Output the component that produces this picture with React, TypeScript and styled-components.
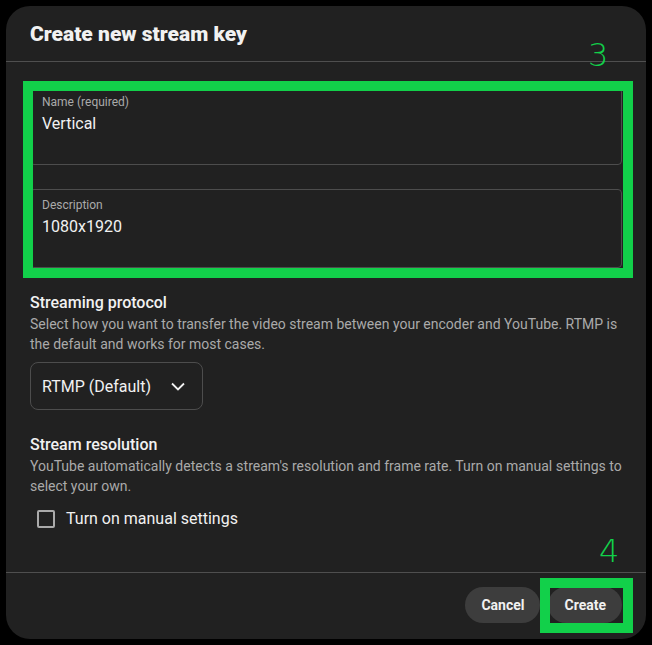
import React from "react";
import styled, { createGlobalStyle } from "styled-components";

const GlobalStyle = createGlobalStyle`
    html, body {
        margin: 0;
        padding: 0;
        background: #000;
        font-family: Roboto, "Liberation Sans", Arial, sans-serif;
    }
`;

export default function App() {
    return (
        <>
            <GlobalStyle />
            <Page>
                <Dialog>
                    <Header>
                        <Title>Create new stream key</Title>
                    </Header>
                    <Body>
                        <Field $height={77} $padTop={5}>
                            <FieldLabel>Name (required)</FieldLabel>
                            <FieldValue>Vertical</FieldValue>
                        </Field>
                        <Field $height={79} $padTop={7}>
                            <FieldLabel>Description</FieldLabel>
                            <FieldValue>1080x1920</FieldValue>
                        </Field>
                        <Section>
                            <SectionTitle>Streaming protocol</SectionTitle>
                            <SectionText>
                                Select how you want to transfer the video stream between your encoder and YouTube. RTMP is
                                the default and works for most cases.
                            </SectionText>
                        </Section>
                        <Dropdown>
                            <span>RTMP (Default)</span>
                            <svg width="24" height="24" viewBox="0 0 24 24">
                                <path d="M6 9.5l6 6 6-6" fill="none" stroke="#f1f1f1" strokeWidth="1.8" />
                            </svg>
                        </Dropdown>
                        <Section $top={24}>
                            <SectionTitle>Stream resolution</SectionTitle>
                            <SectionText>
                                YouTube automatically detects a stream's resolution and frame rate. Turn on manual settings to
                                select your own.
                            </SectionText>
                        </Section>
                        <CheckRow>
                            <CheckBox />
                            <CheckLabel>Turn on manual settings</CheckLabel>
                        </CheckRow>
                    </Body>
                    <Footer>
                        <PillButton>Cancel</PillButton>
                        <PillButton>Create</PillButton>
                    </Footer>

                    <Highlight $left={17} $top={75} $width={610} $height={197} />
                    <StepNumber $left={582} $top={33}>3</StepNumber>
                    <Highlight $left={534} $top={572} $width={93} $height={55} />
                    <StepNumber $left={593} $top={529}>4</StepNumber>
                </Dialog>
            </Page>
        </>
    );
}

const Page = styled.div`
    width: 652px;
    height: 645px;
    padding: 6px;
    box-sizing: border-box;
`;

const Dialog = styled.div`
    position: relative;
    width: 640px;
    height: 633px;
    background: #212121;
    border-radius: 24px;
    display: flex;
    flex-direction: column;
    overflow: hidden;
    color: #f1f1f1;
`;

const Header = styled.div`
    height: 55px;
    flex-shrink: 0;
    display: flex;
    align-items: center;
    padding: 0 24px;
    border-bottom: 1px solid #4f4f4f;
`;

const Title = styled.h1`
    margin: 0;
    font-size: 21px;
    font-weight: 900;
    color: #f1f1f1;
`;

const Body = styled.div`
    flex: 1;
    padding: 26px 24px 0;
    display: flex;
    flex-direction: column;
`;

const Field = styled.div<{ $height: number; $padTop: number }>`
    height: ${(p) => p.$height}px;
    box-sizing: border-box;
    border: 1px solid #4d4d4d;
    border-radius: 4px;
    padding: ${(p) => p.$padTop}px 11px 0;
    margin-bottom: 24px;
`;

const FieldLabel = styled.div`
    font-size: 12px;
    line-height: 16px;
    color: #aaaaaa;
`;

const FieldValue = styled.div`
    margin-top: 2px;
    font-size: 16px;
    line-height: 24px;
    color: #f1f1f1;
`;

const Section = styled.div<{ $top?: number }>`
    margin-top: ${(p) => p.$top ?? 0}px;
`;

const SectionTitle = styled.div`
    font-size: 16px;
    font-weight: 500;
    line-height: 22px;
    color: #f1f1f1;
`;

const SectionText = styled.div`
    font-size: 14px;
    line-height: 20px;
    color: #aaaaaa;
`;

const Dropdown = styled.div`
    margin-top: 8px;
    width: 173px;
    height: 48px;
    box-sizing: border-box;
    border: 1px solid #4d4d4d;
    border-radius: 8px;
    display: flex;
    align-items: center;
    justify-content: space-between;
    padding: 0 12px 0 11px;
    font-size: 16px;
    color: #f1f1f1;
`;

const CheckRow = styled.div`
    margin-top: 13px;
    display: flex;
    align-items: center;
    padding-left: 7px;
    gap: 11px;
`;

const CheckBox = styled.div`
    width: 18px;
    height: 18px;
    box-sizing: border-box;
    border: 2px solid #aaaaaa;
    border-radius: 2px;
`;

const CheckLabel = styled.span`
    font-size: 16px;
    color: #f1f1f1;
`;

const Footer = styled.div`
    height: 67px;
    flex-shrink: 0;
    box-sizing: border-box;
    border-top: 1px solid #4f4f4f;
    display: flex;
    align-items: center;
    justify-content: flex-end;
    gap: 8px;
    padding: 0 24px 2px;
`;

const PillButton = styled.button`
    height: 36px;
    padding: 0 16px;
    border: none;
    border-radius: 18px;
    background: #3d3d3d;
    color: #f1f1f1;
    font-family: Roboto, "Liberation Sans", Arial, sans-serif;
    font-size: 14px;
    font-weight: 700;
`;

const Highlight = styled.div<{ $left: number; $top: number; $width: number; $height: number }>`
    position: absolute;
    left: ${(p) => p.$left}px;
    top: ${(p) => p.$top}px;
    width: ${(p) => p.$width}px;
    height: ${(p) => p.$height}px;
    box-sizing: border-box;
    border: 10px solid #12d04a;
`;

const StepNumber = styled.div<{ $left: number; $top: number }>`
    position: absolute;
    left: ${(p) => p.$left}px;
    top: ${(p) => p.$top}px;
    font-family: "DejaVu Sans", sans-serif;
    font-size: 32px;
    line-height: 32px;
    font-weight: 300;
    color: #12d04a;
`;
